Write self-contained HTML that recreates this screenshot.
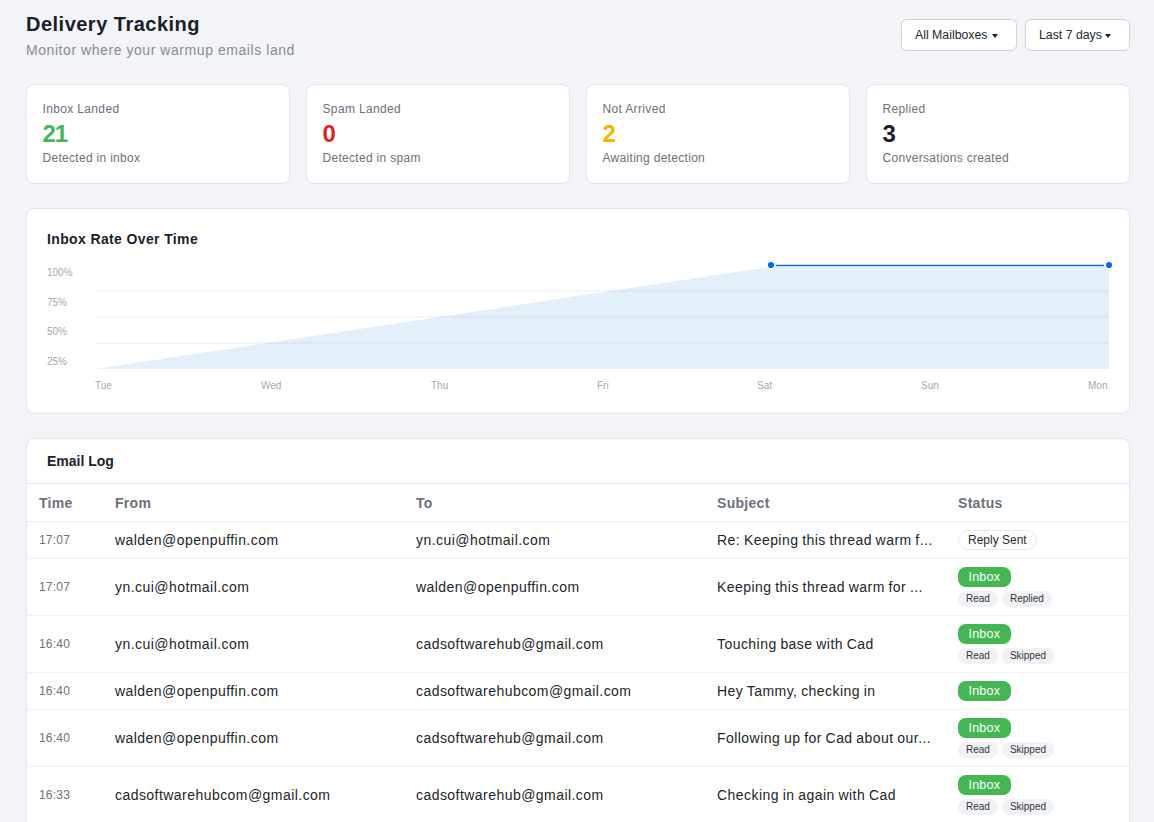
<!DOCTYPE html>
<html><head><meta charset="utf-8">
<style>
*{box-sizing:border-box;margin:0;padding:0}
html,body{width:1154px;height:822px;overflow:hidden}
body{background:#f3f4f8;font-family:"Liberation Sans",sans-serif;color:#1f2430;position:relative}
.abs{position:absolute}
h1{position:absolute;left:26px;top:12px;font-size:20px;line-height:24px;font-weight:bold;color:#1a1f2b;letter-spacing:0.49px;white-space:nowrap}
.sub{position:absolute;left:26px;top:40px;font-size:14px;line-height:20px;color:#868c96;letter-spacing:0.56px;white-space:nowrap}
.btn{position:absolute;top:19px;height:32px;background:#fff;border:1px solid #cfd2d6;border-radius:6px;font-size:12.3px;line-height:30px;color:#23272f;padding-left:13px;white-space:nowrap}
.caret{position:absolute;top:14px;width:0;height:0;border-left:3.5px solid transparent;border-right:3.5px solid transparent;border-top:4px solid #1a1d24}
.card{position:absolute;background:#fff;border:1px solid #e1e5ed;border-radius:8px}
.stat{top:84px;width:264px;height:100px}
.stat .lbl{position:absolute;left:15.5px;top:16px;font-size:12px;line-height:16px;color:#6b7079;letter-spacing:0.35px;white-space:nowrap}
.stat .val{position:absolute;left:15.5px;top:35px;font-size:24px;line-height:28px;font-weight:bold;letter-spacing:-1px;white-space:nowrap}
.stat .det{position:absolute;left:15.5px;top:65px;font-size:12px;line-height:16px;color:#6b7079;letter-spacing:0.3px;white-space:nowrap}
.ctitle{position:absolute;left:20px;top:21px;font-size:14px;line-height:18px;font-weight:bold;color:#1a1f2b;letter-spacing:0.37px;white-space:nowrap}
.ylab{position:absolute;left:20px;font-size:10px;line-height:12px;color:#a4a8ae;white-space:nowrap}
.xlab{position:absolute;top:171px;font-size:10px;line-height:12px;color:#a4a8ae;white-space:nowrap}
table{border-collapse:collapse;table-layout:fixed;width:1102px;position:absolute;left:0;top:44px}
th{font-size:14px;font-weight:bold;color:#6c717a;text-align:left;height:37px;padding:1px 12px 0;border-bottom:1px solid #eceff0;letter-spacing:0.3px;white-space:nowrap}
td{font-size:14px;color:#212529;padding:0 12px;border-bottom:1px solid #eff1f1;white-space:nowrap;letter-spacing:0.45px;vertical-align:middle}
td.t{font-size:12px;color:#6c717a;letter-spacing:0.2px}
td.sj{word-spacing:-0.6px}
tr.s td{height:37px}
tr.d td{height:57px}
.sc{display:flex;flex-direction:column;align-items:flex-start;letter-spacing:0}
.pill{display:block;height:20px;line-height:18px;border-radius:10px;font-size:12px;padding:0 9px;white-space:nowrap}
.ps{background:#fff;border:1px solid #e6e8ec;color:#262a31}
.pg{background:#44b653;color:#fff;line-height:20px;font-size:12.5px;padding:0 10.5px;letter-spacing:0.2px;border-radius:8px}
.tags{margin-top:4px;height:16px;display:flex}
.tag{display:block;height:16px;line-height:16px;border-radius:8px;background:#f0f2f5;color:#30343b;font-size:10px;padding:0 8px;margin-right:4px}
</style></head>
<body>
<h1>Delivery Tracking</h1>
<div class="sub">Monitor where your warmup emails land</div>
<div class="btn" style="left:901px;width:116px">All Mailboxes<span class="caret" style="left:90px"></span></div>
<div class="btn" style="left:1025px;width:105px">Last 7 days<span class="caret" style="left:79px"></span></div>

<div class="card stat" style="left:26px"><div class="lbl">Inbox Landed</div><div class="val" style="color:#44b653">21</div><div class="det">Detected in inbox</div></div>
<div class="card stat" style="left:306px"><div class="lbl">Spam Landed</div><div class="val" style="color:#df1f27">0</div><div class="det">Detected in spam</div></div>
<div class="card stat" style="left:586px"><div class="lbl">Not Arrived</div><div class="val" style="color:#f5b300">2</div><div class="det">Awaiting detection</div></div>
<div class="card stat" style="left:866px"><div class="lbl">Replied</div><div class="val" style="color:#1a1f2b">3</div><div class="det">Conversations created</div></div>

<div class="card" style="left:26px;top:208px;width:1104px;height:206px">
  <div class="ctitle">Inbox Rate Over Time</div>
  <div class="ylab" style="top:58px">100%</div>
  <div class="ylab" style="top:88px">75%</div>
  <div class="ylab" style="top:117px">50%</div>
  <div class="ylab" style="top:147px">25%</div>
  <svg class="abs" style="left:0;top:0" width="1102" height="203">
    <g stroke="#f5f6f9" stroke-width="2">
      <line x1="68" y1="82" x2="1082" y2="82"/>
      <line x1="68" y1="108" x2="1082" y2="108"/>
      <line x1="68" y1="134" x2="1082" y2="134"/>
    </g>
    <polygon points="68,160 744,57.8 1082,57.8 1082,160" fill="rgba(10,105,230,0.11)"/>
    <line x1="744" y1="56.5" x2="1082" y2="56.5" stroke="#0a6ce4" stroke-width="1.4"/>
    <circle cx="744" cy="56" r="4" fill="#0a6ce4" stroke="#fff" stroke-width="1.8"/>
    <circle cx="1082" cy="56" r="4" fill="#0a6ce4" stroke="#fff" stroke-width="1.8"/>
  </svg>
  <div class="xlab" style="left:68px">Tue</div>
  <div class="xlab" style="left:234px">Wed</div>
  <div class="xlab" style="left:404px">Thu</div>
  <div class="xlab" style="left:570px">Fri</div>
  <div class="xlab" style="left:730px">Sat</div>
  <div class="xlab" style="left:894px">Sun</div>
  <div class="xlab" style="left:1061px">Mon</div>
</div>

<div class="card" style="left:26px;top:438px;width:1104px;height:420px;overflow:hidden">
  <div class="ctitle" style="top:13px;letter-spacing:0">Email Log</div>
  <div class="abs" style="left:0;top:44px;width:1102px;border-top:1px solid #e1e5ed"></div>
  <table style="top:45px">
    <colgroup><col style="width:76px"><col style="width:301px"><col style="width:301px"><col style="width:241px"><col style="width:183px"></colgroup>
    <thead><tr><th>Time</th><th>From</th><th>To</th><th>Subject</th><th>Status</th></tr></thead>
    <tbody>
      <tr class="s"><td class="t">17:07</td><td>walden@openpuffin.com</td><td>yn.cui@hotmail.com</td><td class="sj">Re: Keeping this thread warm f...</td><td><div class="sc"><span class="pill ps">Reply Sent</span></div></td></tr>
      <tr class="d"><td class="t">17:07</td><td>yn.cui@hotmail.com</td><td>walden@openpuffin.com</td><td class="sj">Keeping this thread warm for ...</td><td><div class="sc"><span class="pill pg">Inbox</span><div class="tags"><span class="tag">Read</span><span class="tag">Replied</span></div></div></td></tr>
      <tr class="d"><td class="t">16:40</td><td>yn.cui@hotmail.com</td><td>cadsoftwarehub@gmail.com</td><td class="sj">Touching base with Cad</td><td><div class="sc"><span class="pill pg">Inbox</span><div class="tags"><span class="tag">Read</span><span class="tag">Skipped</span></div></div></td></tr>
      <tr class="s"><td class="t">16:40</td><td>walden@openpuffin.com</td><td>cadsoftwarehubcom@gmail.com</td><td class="sj">Hey Tammy, checking in</td><td><div class="sc"><span class="pill pg">Inbox</span></div></td></tr>
      <tr class="d"><td class="t">16:40</td><td>walden@openpuffin.com</td><td>cadsoftwarehub@gmail.com</td><td class="sj">Following up for Cad about our...</td><td><div class="sc"><span class="pill pg">Inbox</span><div class="tags"><span class="tag">Read</span><span class="tag">Skipped</span></div></div></td></tr>
      <tr class="d"><td class="t">16:33</td><td>cadsoftwarehubcom@gmail.com</td><td>cadsoftwarehub@gmail.com</td><td class="sj">Checking in again with Cad</td><td><div class="sc"><span class="pill pg">Inbox</span><div class="tags"><span class="tag">Read</span><span class="tag">Skipped</span></div></div></td></tr>
    </tbody>
  </table>
</div>
</body></html>
